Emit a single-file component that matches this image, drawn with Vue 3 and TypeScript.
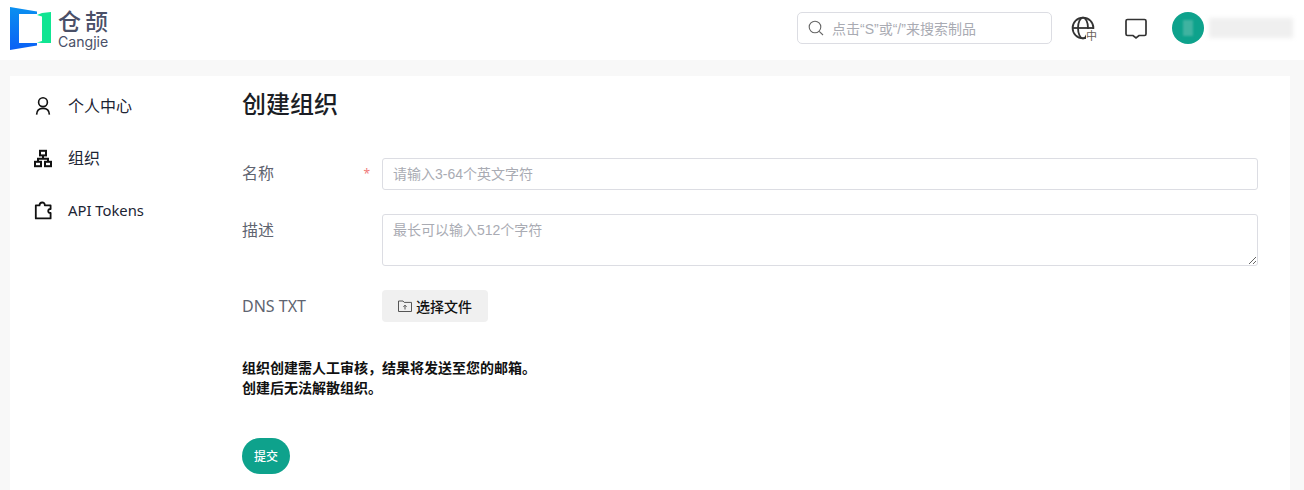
<script setup lang="ts">
const menu = [
  { key: 'user', label: '个人中心' },
  { key: 'org', label: '组织' },
  { key: 'api', label: 'API Tokens' },
]
</script>

<template>
  <div class="page">
    <header class="topbar">
      <div class="logo">
        <svg class="logo-mark" width="42" height="43" viewBox="0 0 42 43">
          <defs>
            <linearGradient id="lb" x1="0" y1="0" x2="0" y2="1">
              <stop offset="0" stop-color="#0a90f0" />
              <stop offset="1" stop-color="#0a60f5" />
            </linearGradient>
          </defs>
          <path fill="url(#lb)" d="M0 0 L27 4.5 V7 H9 V36 H27 V38.5 L0 43 Z" />
          <path fill="#10e592" d="M32 6 L41 5 V36 L32 36 L27 35.5 L32 34 V9.5 L27 8 Z" />
        </svg>
        <div class="logo-text">
          <div class="logo-cn">仓颉</div>
          <div class="logo-en">Cangjie</div>
        </div>
      </div>
      <div class="top-right">
        <div class="search">
          <svg width="16" height="16" viewBox="0 0 16 16" fill="none" stroke="#666" stroke-width="1.1">
            <circle cx="7" cy="7" r="5.8" />
            <path d="M11.2 11.4 L15 15" />
          </svg>
          <span class="search-ph">点击“S”或“/”来搜索制品</span>
        </div>
        <div class="lang">
          <svg width="26" height="26" viewBox="0 0 26 26" fill="none" stroke="#333" stroke-width="1.8">
            <circle cx="12" cy="12" r="10.4" />
            <ellipse cx="12" cy="12" rx="5" ry="10.4" />
            <path d="M1.5 12 H22.5" />
          </svg>
          <span class="lang-zh">中</span>
        </div>
        <svg class="msg" width="24" height="24" viewBox="0 0 24 24" fill="none" stroke="#333" stroke-width="1.7">
          <path d="M3.5 2.5 H20.5 A1.5 1.5 0 0 1 22 4 V17 A1.5 1.5 0 0 1 20.5 18.5 H15 L12 21 L9 18.5 H3.5 A1.5 1.5 0 0 1 2 17 V4 A1.5 1.5 0 0 1 3.5 2.5 Z" />
        </svg>
        <div class="avatar"><span class="avatar-inner"></span></div>
        <div class="name-blur"></div>
      </div>
    </header>

    <main class="card">
      <nav class="side">
        <div v-for="m in menu" :key="m.key" class="side-item">
          <svg v-if="m.key === 'user'" width="18" height="20" viewBox="0 0 18 20" fill="none" stroke="#111" stroke-width="1.6">
            <circle cx="9" cy="6.2" r="4.4" />
            <path d="M2.6 18.6 C2.8 14.6 5.4 12.4 9 12.4 C12.6 12.4 15.2 14.6 15.4 18.6" />
          </svg>
          <svg v-else-if="m.key === 'org'" width="18" height="20" viewBox="0 0 18 20" fill="none" stroke="#111" stroke-width="2">
            <rect x="6" y="2.8" width="6" height="4.6" />
            <rect x="1" y="13.8" width="6" height="4.4" />
            <rect x="11" y="13.8" width="6" height="4.4" />
            <path d="M9 7.4 V10.8 M4 13.8 V10.8 H14 V13.8" />
          </svg>
          <svg v-else width="18" height="20" viewBox="0 0 18 20" fill="none" stroke="#111" stroke-width="1.8">
            <path d="M1.8 5.4 H5.5 C5.6 1.5 11 1.5 10.8 5.4 H16.6 V9 C13.4 8.6 13.4 13.4 16.6 13 V18.4 H1.8 Z" stroke-linejoin="round" />
          </svg>
          <span :class="{ latin: m.key === 'api' }">{{ m.label }}</span>
        </div>
      </nav>

      <section class="content">
        <h1 class="title">创建组织</h1>

        <div class="row row-name">
          <label class="label">名称<i class="req">*</i></label>
          <input class="field" placeholder="请输入3-64个英文字符" />
        </div>
        <div class="row row-desc">
          <label class="label">描述</label>
          <textarea class="field area" placeholder="最长可以输入512个字符"></textarea>
        </div>
        <div class="row row-file">
          <label class="label">DNS TXT</label>
          <button class="file-btn" type="button">
            <svg width="14" height="12" viewBox="0 0 14 12" fill="none" stroke="#555" stroke-width="1">
              <path d="M.5 11.5 V1 H5 L6.2 2.4 H13.5 V11.5 Z" />
              <path d="M7 9.5 V5.2 M5.4 6.8 L7 5.2 L8.6 6.8" />
            </svg>
            选择文件
          </button>
        </div>

        <p class="notice">组织创建需人工审核，结果将发送至您的邮箱。<br />创建后无法解散组织。</p>

        <button class="submit" type="button">提交</button>
      </section>
    </main>
  </div>
</template>

<style>
html, body { margin: 0; background: #f8f8f8; }
</style>

<style scoped>
.page {
  width: 1304px;
  height: 490px;
  overflow: hidden;
  background: #f8f8f8;
  font-family: "Noto Sans", "Noto Sans CJK SC", sans-serif;
  color: #111;
}
.topbar {
  height: 60px;
  background: #fff;
  display: flex;
  justify-content: space-between;
  align-items: flex-start;
  box-sizing: border-box;
  padding: 0 11px 0 10px;
}
.logo { display: flex; align-items: flex-start; gap: 6px; padding-top: 7px; }
.logo-text { color: #4a5068; margin-top: 2px; }
.logo-cn { font-size: 23px; line-height: 24px; font-weight: 500; letter-spacing: 4px; white-space: nowrap; }
.logo-en { font-family: "Inter", sans-serif; font-size: 14.1px; line-height: 17px; }
.top-right { display: flex; align-items: center; padding-top: 12px; }
.search {
  width: 255px;
  height: 32px;
  box-sizing: border-box;
  border: 1px solid #dcdde3;
  border-radius: 5px;
  display: flex;
  align-items: center;
  padding-left: 10px;
  gap: 8px;
  margin-right: 19px;
}
.search-ph { font-size: 14px; color: #a9abb3; white-space: nowrap; font-family: "Liberation Sans", "Noto Sans CJK SC", sans-serif; }
.lang { position: relative; width: 26px; height: 26px; margin-right: 27px; margin-top: 2px; }
.lang-zh {
  position: absolute;
  left: 15px;
  top: 13px;
  font-size: 11px;
  line-height: 13px;
  color: #6a5f58;
  background: #fff;
}
.msg { margin-right: 24px; margin-top: 2px; }
.avatar {
  width: 32px;
  height: 32px;
  border-radius: 50%;
  background: #0ea28c;
  display: flex;
  align-items: center;
  justify-content: center;
}
.avatar-inner { width: 10px; height: 16px; background: #3fb3a0; filter: blur(1px); }
.name-blur {
  width: 84px;
  height: 20px;
  margin-left: 5px;
  background: #efefef;
  filter: blur(2px);
}
.card {
  margin: 16px 14px 0 10px;
  height: 420px;
  background: #fff;
  display: flex;
}
.side { width: 232px; flex: none; padding: 4px 0 0 24px; box-sizing: border-box; }
.side-item {
  height: 52px;
  display: flex;
  align-items: center;
  gap: 16px;
  font-size: 16px;
  line-height: 24px;
  color: #1c2433;
}
.side-item .latin { font-size: 14.8px; }
.content { flex: 1; min-width: 0; padding-right: 32px; }
.title {
  margin: 0;
  padding-top: 10px;
  font-size: 24px;
  line-height: 36px;
  font-weight: 500;
  color: #1a1d24;
}
.row { display: flex; align-items: flex-start; }
.row-name { margin-top: 36px; }
.row-desc { margin-top: 24px; }
.row-file { margin-top: 24px; }
.label {
  width: 140px;
  flex: none;
  box-sizing: border-box;
  padding-right: 12px;
  font-size: 16px;
  line-height: 31px;
  color: #5f6470;
  display: flex;
  justify-content: space-between;
}
.row-desc .label, .row-file .label { line-height: 33px; }
.req { font-style: normal; color: #f07a7a; font-size: 12px; }
.field {
  flex: 1;
  min-width: 0;
  height: 32px;
  box-sizing: border-box;
  border: 1px solid #dcdde3;
  border-radius: 3px;
  padding: 0 10px;
  font-family: "Liberation Sans", "Noto Sans CJK SC", sans-serif;
  font-size: 14px;
  outline: none;
  color: #111;
  background: #fff;
}
.field::placeholder { color: #a9abb3; opacity: 1; }
.area { height: 52px; padding: 5px 10px; line-height: 20px; display: block; resize: vertical; }
.file-btn {
  width: 106px;
  height: 32px;
  border: none;
  border-radius: 4px;
  background: #f0f0f0;
  font-family: inherit;
  font-size: 14px;
  font-weight: 500;
  color: #111;
  display: flex;
  align-items: center;
  justify-content: center;
  gap: 4px;
  padding: 0;
}
.notice {
  margin: 35px 0 0;
  font-size: 14px;
  line-height: 20px;
  font-weight: 700;
  color: #111;
}
.submit {
  display: block;
  margin-top: 40px;
  width: 48px;
  height: 36px;
  border: none;
  border-radius: 18px;
  background: #0ea28c;
  color: #fff;
  font-family: inherit;
  font-size: 12px;
  font-weight: 500;
  padding: 0;
}
</style>
